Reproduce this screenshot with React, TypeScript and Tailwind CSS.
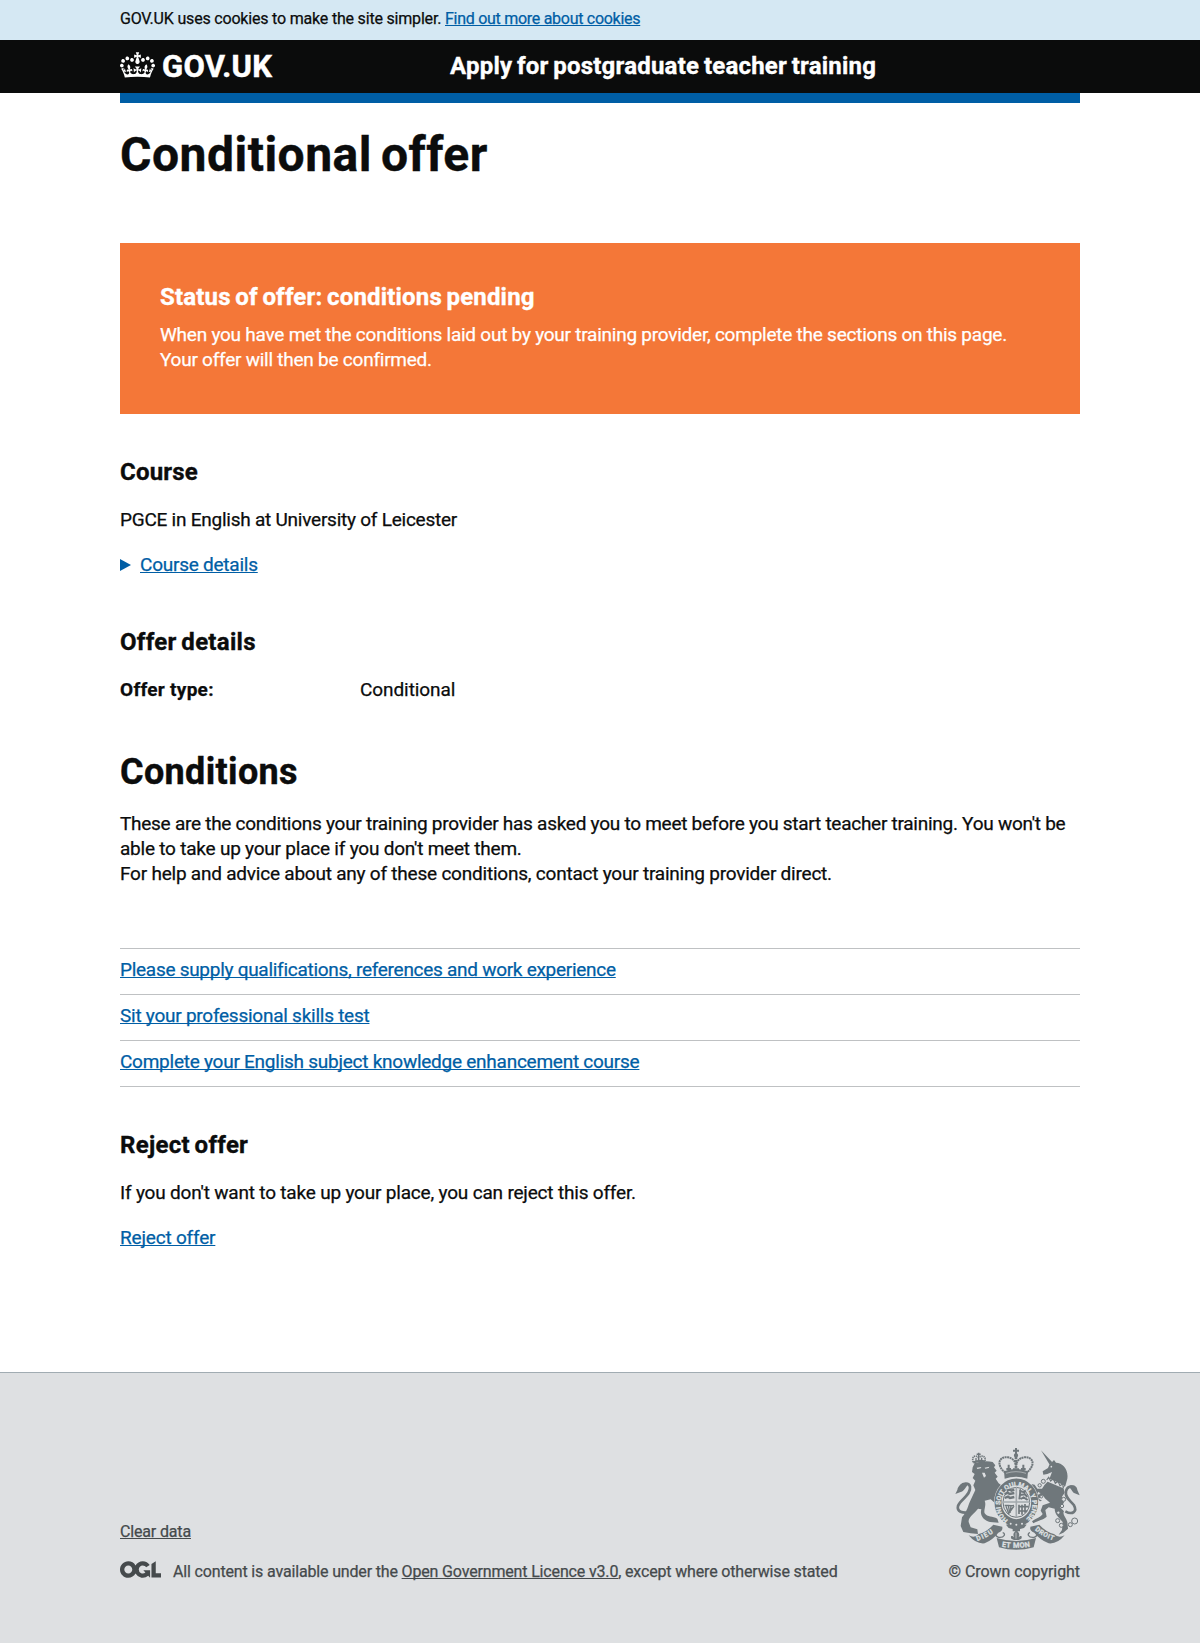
import type { ReactNode } from "react";

function CrownLogo() {
  return (
    <svg viewBox="0 0 132 97" className="h-[26px] w-[35px] shrink-0" fill="currentColor" aria-hidden="true">
      <path
        fillRule="evenodd"
        d="M25 30.2c3.5 1.5 7.7-.2 9.1-3.7 1.5-3.6-.2-7.8-3.9-9.2-3.6-1.4-7.6.3-9.1 3.9-1.4 3.5.3 7.5 3.9 9zM9 39.5c3.6 1.5 7.8-.2 9.2-3.7 1.5-3.6-.2-7.8-3.9-9.1-3.6-1.5-7.6.2-9.1 3.8-1.4 3.5.3 7.5 3.8 9zM4.4 57.2c3.5 1.5 7.7-.2 9.1-3.8 1.5-3.6-.2-7.7-3.9-9.1-3.5-1.5-7.6.3-9.1 3.8-1.4 3.5.3 7.6 3.9 9.1zm38.3-21.4c3.5 1.5 7.7-.2 9.1-3.8 1.5-3.6-.2-7.7-3.9-9.1-3.6-1.5-7.6.3-9.1 3.8-1.3 3.6.4 7.7 3.9 9.1zm64.4-5.6c-3.6 1.5-7.8-.2-9.1-3.7-1.5-3.6.2-7.8 3.8-9.2 3.6-1.4 7.7.3 9.2 3.9 1.3 3.5-.4 7.5-3.9 9zm15.9 9.3c-3.6 1.5-7.7-.2-9.1-3.7-1.5-3.6.2-7.8 3.7-9.1 3.6-1.5 7.7.2 9.2 3.8 1.5 3.5-.3 7.5-3.8 9zm4.7 17.7c-3.6 1.5-7.8-.2-9.2-3.8-1.5-3.6.2-7.7 3.9-9.1 3.6-1.5 7.7.3 9.2 3.8 1.3 3.5-.4 7.6-3.9 9.1zM89.3 35.8c-3.6 1.5-7.8-.2-9.2-3.8-1.4-3.6.2-7.7 3.9-9.1 3.6-1.5 7.7.3 9.2 3.8 1.4 3.6-.3 7.7-3.9 9.1zM69.7 17.7l8.9 4.7V9.3l-8.9 2.8c-.2-.3-.5-.6-.9-.9L72.4 0H59.6l3.5 11.2c-.3.3-.6.5-.9.9l-8.8-2.8v13.1l8.8-4.7c.3.3.6.7.9.9l-5 15.4v.1c-.2.8-.4 1.6-.4 2.4 0 4.1 3.1 7.5 7 8.1h.2c.3 0 .7.1 1 .1.4 0 .7 0 1-.1h.2c4-.6 7.1-4.1 7.1-8.1 0-.8-.1-1.7-.4-2.4V34l-5.1-15.4c.4-.2.7-.6 1-.9zM66 92.8c16.9 0 32.8 1.1 47.1 3.2 4-16.9 8.9-26.7 14-33.5l-9.6-3.4c1 4.9 1.1 7.2 0 10.2-1.5-1.4-3-4.3-4.2-8.7L108.6 76c2.8-2 5-3.2 7.5-3.3-4.4 9.4-10 11.9-13.6 11.2-4.3-.8-6.3-4.6-5.6-7.9 1-4.7 5.7-5.9 8-.5 4.3-8.7-3-11.4-7.6-8.8 7.1-7.2 7.9-13.5 2.1-21.1-8 6.1-8.1 12.3-4.5 20.8-4.7-5.4-12.1-2.5-9.5 6.2 3.4-5.2 7.9-2 7.2 3.1-.6 4.3-6.4 7.8-13.5 7.2-10.3-.9-10.9-8-11.2-13.8 2.5-.5 7.1 1.8 11 7.3L80.2 60c-4.1 4.4-8 5.3-12.3 5.4 1.4-4.4 8-11.6 8-11.6H55.5s6.4 7.2 7.9 11.6c-4.2-.1-8-1-12.3-5.4l1.4 16.4c3.9-5.5 8.5-7.7 10.9-7.3-.3 5.8-.9 12.8-11.1 13.8-7.2.6-12.9-2.9-13.5-7.2-.7-5 3.8-8.3 7.1-3.1 2.7-8.7-4.6-11.6-9.4-6.2 3.7-8.5 3.6-14.7-4.6-20.8-5.8 7.6-5 13.9 2.2 21.1-4.7-2.6-11.9.1-7.7 8.8 2.3-5.5 7.1-4.2 8.1.5.7 3.3-1.3 7.1-5.7 7.9-3.5.7-9-1.8-13.5-11.2 2.5.1 4.7 1.3 7.5 3.3l-4.7-15.4c-1.2 4.4-2.7 7.2-4.3 8.7-1.1-3-.9-5.3 0-10.2l-9.5 3.4c5 6.9 9.9 16.7 14 33.5 14.8-2.1 30.8-3.2 47.7-3.2z"
      />
    </svg>
  );
}

function OglLogo() {
  return (
    <svg viewBox="0 0 483.2 195.7" className="-mt-px h-[17px] w-[41px] shrink-0" fill="currentColor" aria-hidden="true">
      <path d="M421.5 142.8V.1l-50.7 32.3v161.1h112.4v-50.7zm-122.3-9.6A47.12 47.12 0 0 1 221 97.8c0-26 21.1-47.1 47.1-47.1 16.7 0 31.4 8.7 39.7 21.8l42.7-27.2A97.63 97.63 0 0 0 268.1 0c-36.5 0-68.3 20.1-85.1 49.7A98 98 0 0 0 97.8 0C43.9 0 0 43.9 0 97.8s43.9 97.8 97.8 97.8c36.5 0 68.3-20.1 85.1-49.7a97.76 97.76 0 0 0 149.6 25.4l19.4 22.2h3v-87.8h-80l24.3 27.5zM97.8 145c-26 0-47.1-21.1-47.1-47.1s21.1-47.1 47.1-47.1 47.1 21.1 47.1 47.1S123.8 145 97.8 145" />
    </svg>
  );
}

const INK = "#6f777b";
const PAPER = "#dee0e2";

function RoyalArms() {
  return (
    <svg viewBox="45 54 375 306" className="h-[102px] w-[125px]" fill={INK} aria-hidden="true">
      {/* lion's tail */}
      <path
        d="M92 246C66 252 50 244 54 228C60 208 94 196 90 170C87 158 70 158 62 168"
        fill="none"
        stroke={INK}
        strokeWidth="8"
      />
      <path d="M86 160C68 156 54 166 52 180L46 192L60 187C74 184 78 170 86 160Z" />
      {/* lion */}
      <path d="M98 112L104 100C118 94 142 92 158 96L166 106L162 112L170 122L164 128L173 140L167 146L176 160L190 170L180 176L186 188L176 196L182 214L192 228L186 244L176 236L168 222L152 208L134 212C140 226 130 240 134 250C142 262 158 258 172 266L176 278L150 276C134 272 118 258 124 238L114 236C102 252 84 262 86 276L92 292L112 298L114 312L92 310L70 306L62 288L66 262C82 244 84 226 92 210L106 180L100 166L106 152L98 144L104 132L96 126Z" />
      <path d="M110 113L124 111L122 115L112 117ZM134 113L148 110L146 114L136 116ZM126 128L134 128L138 138L132 143Z" fill={PAPER} />
      {/* lion's crown */}
      <g fill="none" stroke={INK}>
        <path d="M100 97C94 80 104 74 116 82C128 74 140 80 134 95" strokeWidth="5" strokeDasharray="4 2" />
        <path d="M100 98C112 92 124 91 135 95" strokeWidth="7" />
        <path d="M116 68V94M110 73H122" strokeWidth="4.5" />
        <path d="M108 84V93M125 83V92" strokeWidth="4" />
      </g>
      {/* unicorn's tail */}
      <path
        d="M376 244C398 256 412 244 402 226C392 212 374 204 378 184C381 170 392 168 400 172"
        fill="none"
        stroke={INK}
        strokeWidth="8"
      />
      <path d="M384 170C398 160 412 168 412 180L419 196L404 190C394 184 396 176 384 170Z" />
      {/* unicorn */}
      <path d="M303 61L337 97L329 104Z" />
      <path d="M328 104L342 90L348 98C368 98 386 118 382 146L376 168L370 172L374 188L366 200L372 218L360 232L372 244C366 252 378 262 382 276L384 296L370 308L356 314L366 300L368 276C358 262 344 254 344 236L326 232L316 240L320 260C310 270 296 270 280 280L276 274C292 262 302 262 308 252L302 242L308 226L330 218L316 206L308 196L296 206L306 212L300 214L286 202L290 190L278 178L274 162L284 164L292 176L306 176L314 164L322 156L330 142L336 126L322 132L310 134L308 124L324 114Z" />
      <path d="M324 144L372 166L368 174L316 152Z" fill={PAPER} />
      <path d="M320 150L326 142L332 153L340 146L346 160L354 154L360 167L368 162L370 174" fill="none" stroke={INK} strokeWidth="3.5" />
      <circle cx="334" cy="110" r="2.5" fill={PAPER} />
      {/* chain */}
      <g fill={PAPER} stroke={INK} strokeWidth="3">
        <circle cx="310" cy="154" r="6" />
        <circle cx="299" cy="166" r="5" />
        <circle cx="296" cy="190" r="5" />
        <circle cx="304" cy="200" r="4" />
        <circle cx="371" cy="208" r="6" />
        <circle cx="366" cy="228" r="5" />
        <circle cx="355" cy="248" r="5" />
        <circle cx="353" cy="272" r="6" />
        <circle cx="364" cy="286" r="6" />
        <circle cx="391" cy="284" r="6" />
        <circle cx="404" cy="273" r="9" />
      </g>
      {/* imperial crown */}
      <g fill="none" stroke={INK}>
        <path
          d="M196 128C166 104 178 78 204 82C218 84 226 94 228 106C230 94 238 84 252 82C278 78 290 104 260 128"
          strokeWidth="6"
          strokeDasharray="6 1.5"
        />
        <path d="M228 54V78M219 62H237" strokeWidth="6" />
        <path d="M228 80V122" strokeWidth="8" strokeDasharray="7 2" />
        <path d="M206 104V122M199 117H213M250 104V122M243 117H257M219 118H237" strokeWidth="6" />
        <circle cx="228" cy="76" r="4" strokeWidth="5" />
      </g>
      <path d="M192 124Q228 110 264 124L262 146Q228 134 194 146Z" />
      <path d="M198 130Q228 120 258 130" fill="none" stroke={PAPER} strokeWidth="1.5" />
      {/* garter */}
      <ellipse cx="229" cy="217" rx="67" ry="74" fill={PAPER} />
      <ellipse cx="229" cy="217" rx="55" ry="61" fill="none" stroke={INK} strokeWidth="21" />
      <defs>
        <path id="garter" d="M204 270A48 54 0 1 1 254 270" />
        <path id="dieu" d="M112 333Q140 324 166 304" />
        <path id="mon" d="M180 349Q228 358 276 349" />
        <path id="droit" d="M284 300Q310 322 348 334" />
      </defs>
      <text fill={PAPER} stroke={PAPER} strokeWidth="0.8" fontFamily="Roboto" fontWeight="700" fontSize="20">
        <textPath href="#garter" textLength="262">HONI SOIT QUI MAL Y PENSE</textPath>
      </text>
      <path d="M198 284L229 276L260 284L252 294L229 300L206 294Z" />
      <g fill={PAPER}>
        <circle cx="212" cy="281" r="3" />
        <circle cx="229" cy="284" r="3" />
        <circle cx="246" cy="281" r="3" />
      </g>
      {/* quartered shield */}
      <ellipse cx="229" cy="217" rx="40" ry="45" fill={PAPER} stroke={INK} strokeWidth="3" />
      <g fill="none" stroke={INK} strokeWidth="7">
        <path d="M194 193l9-5 6 4 14-3M194 204l10-4 6 4 13-3M200 182l9-3 6 3 8-3" />
        <path d="M237 224v28M246 224v30M255 222v26M236 230h30M236 243h26" strokeWidth="5" />
        <path d="M194 226c12 0 18 2 28 0M197 226l9 25 16-23M205 226l4 22M213 226l-2 22" strokeWidth="4" />
        <path d="M238 208c2-16 4-24 2-30M241 183l12 4 4-6M240 195l15-2 7 8M242 207l9-5 12 8" strokeWidth="6" />
      </g>
      <path d="M229 172V262M189 216H269" fill="none" stroke="#a3a9ad" strokeWidth="5" />
      {/* motto ribbon */}
      <path d="M86 316Q104 326 116 312Q140 306 160 284L187 290Q189 303 175 308Q160 328 134 340Q108 343 86 316Z" />
      <path d="M374 316Q356 326 342 312Q318 306 298 284L271 290Q269 303 283 308Q298 328 326 340Q352 343 374 316Z" />
      <path d="M186 296C168 300 160 318 176 322C194 324 198 310 188 308" fill="none" stroke={INK} strokeWidth="4" />
      <path d="M272 296C290 300 298 318 282 322C264 324 260 310 270 308" fill="none" stroke={INK} strokeWidth="4" />
      <path d="M170 324Q228 342 288 324L281 352Q228 367 177 352Z" />
      <g fill={PAPER} stroke={PAPER} strokeWidth="0.8" fontFamily="Roboto" fontWeight="700">
        <text fontSize="20">
          <textPath href="#dieu" textLength="54">DIEU</textPath>
        </text>
        <text fontSize="22">
          <textPath href="#mon" textLength="86" startOffset="5">ET MON</textPath>
        </text>
        <text fontSize="20">
          <textPath href="#droit" textLength="64">DROIT</textPath>
        </text>
      </g>
      {/* fleur-de-lis */}
      <path d="M218 296H240V304H232C242 312 236 320 236 322C242 314 248 318 244 326L236 330H222L214 326C210 318 216 314 222 322C222 320 216 312 226 304H218Z" />
      <path d="M228 308V326" stroke={PAPER} strokeWidth="2" />
    </svg>
  );
}

function Link({ children, className = "text-[#005ea5]" }: { children: ReactNode; className?: string }) {
  return (
    <a
      href="#"
      className={`underline decoration-1 underline-offset-1 [text-decoration-skip-ink:none] ${className}`}
    >
      {children}
    </a>
  );
}

function Heading({ children, className }: { children: ReactNode; className: string }) {
  return (
    <h2 className={`text-2xl/[30px] font-bold [-webkit-text-stroke:0.35px] [word-spacing:-1.5px] ${className}`}>
      {children}
    </h2>
  );
}

const conditions = [
  "Please supply qualifications, references and work experience",
  "Sit your professional skills test",
  "Complete your English subject knowledge enhancement course",
];

export default function App() {
  return (
    <div className="min-h-[1643px] bg-white font-[Roboto,sans-serif] text-[#0b0c0c] [-webkit-text-stroke:0.25px]">
      <div className="h-10 bg-[#d5e8f3] px-[120px] pt-[9px] text-base/5 tracking-[-0.19px]">
        <p>
          GOV.UK uses cookies to make the site simpler.{" "}
          <Link className="tracking-[-0.28px] text-[#005ea5]">Find out more about cookies</Link>
        </p>
      </div>

      <header className="h-[53px] bg-[#0b0c0c] text-white">
        <div className="mx-auto flex w-[960px] items-start pt-3">
          <a href="#" className="flex w-[330px] gap-[7px]">
            <CrownLogo />
            <span className="text-[31px]/[30px] font-bold tracking-[0.35px] [-webkit-text-stroke:0.5px]">GOV.UK</span>
          </a>
          <span className="-mt-px text-2xl/[30px] font-bold tracking-[0.22px] [-webkit-text-stroke:0.35px] [word-spacing:-1.5px]">
            Apply for postgraduate teacher training
          </span>
        </div>
      </header>

      <main className="mx-auto w-[960px] text-[19px]/[25px] tracking-[-0.24px]">
        <div className="h-[10px] bg-[#005ea5]" />

        <h1 className="mt-[27px] text-5xl/[50px] font-bold tracking-[0.5px] [-webkit-text-stroke:0.4px] [word-spacing:-3.5px]">
          Conditional offer
        </h1>

        <section className="mt-[63px] h-[171px] bg-[#f47738] px-10 pt-[39px] text-white">
          <Heading className="tracking-[0.17px]">Status of offer: conditions pending</Heading>
          <p className="mt-[10px]">
            When you have met the conditions laid out by your training provider, complete the sections on this page.
            <br />
            Your offer will then be confirmed.
          </p>
        </section>

        <section className="mt-[43px]">
          <Heading className="tracking-[0.2px]">Course</Heading>
          <p className="mt-5">PGCE in English at University of Leicester</p>
          <p className="mt-5 flex items-center gap-[9px] text-[#005ea5]">
            <svg viewBox="0 0 11 12" className="h-3 w-[11px]" fill="currentColor" aria-hidden="true">
              <path d="M0 0L11 6L0 12Z" />
            </svg>
            <Link>Course details</Link>
          </p>
        </section>

        <section className="mt-[50px]">
          <Heading className="tracking-[0.28px]">Offer details</Heading>
          <dl className="mt-5 flex">
            <dt className="w-60 font-bold tracking-[0.28px]">Offer type:</dt>
            <dd className="tracking-[-0.08px]">Conditional</dd>
          </dl>
        </section>

        <section className="mt-[50px]">
          <h2 className="text-4xl/[40px] font-bold tracking-[0.34px] [-webkit-text-stroke:0.4px]">Conditions</h2>
          <p className="mt-[19px]">
            <span className="tracking-[-0.265px]">
              These are the conditions your training provider has asked you to meet before you start teacher training.
              You won't be
            </span>
            <br />
            <span className="tracking-[-0.22px]">
              able to take up your place if you don't meet them.
              <br />
              For help and advice about any of these conditions, contact your training provider direct.
            </span>
          </p>
          <ul className="mt-[62px] border-t border-[#bfc1c3]">
            {conditions.map((c) => (
              <li key={c} className="border-b border-[#bfc1c3] pt-2 pb-3 tracking-[-0.25px] first:tracking-[-0.28px]">
                <Link>{c}</Link>
              </li>
            ))}
          </ul>
        </section>

        <section className="mt-[43px] tracking-[-0.19px]">
          <Heading className="tracking-[0.28px]">Reject offer</Heading>
          <p className="mt-5">If you don't want to take up your place, you can reject this offer.</p>
          <p className="mt-5">
            <Link>Reject offer</Link>
          </p>
        </section>
      </main>

      <footer className="mt-[122px] h-[271px] border-t border-[#a1acb2] bg-[#dee0e2] pt-[75px] text-base/5 text-[#454a4c]">
        <div className="mx-auto flex w-[960px] items-end justify-between">
          <div className="tracking-[-0.16px]">
            <p>
              <Link className="text-[#454a4c]">Clear data</Link>
            </p>
            <div className="mt-5 flex gap-3">
              <OglLogo />
              <p>
                All content is available under the{" "}
                <Link className="text-[#454a4c]">Open Government Licence v3.0</Link>, except where otherwise stated
              </p>
            </div>
          </div>
          <div className="flex flex-col items-end">
            <RoyalArms />
            <p className="mt-3 tracking-[-0.06px]">© Crown copyright</p>
          </div>
        </div>
      </footer>
    </div>
  );
}
